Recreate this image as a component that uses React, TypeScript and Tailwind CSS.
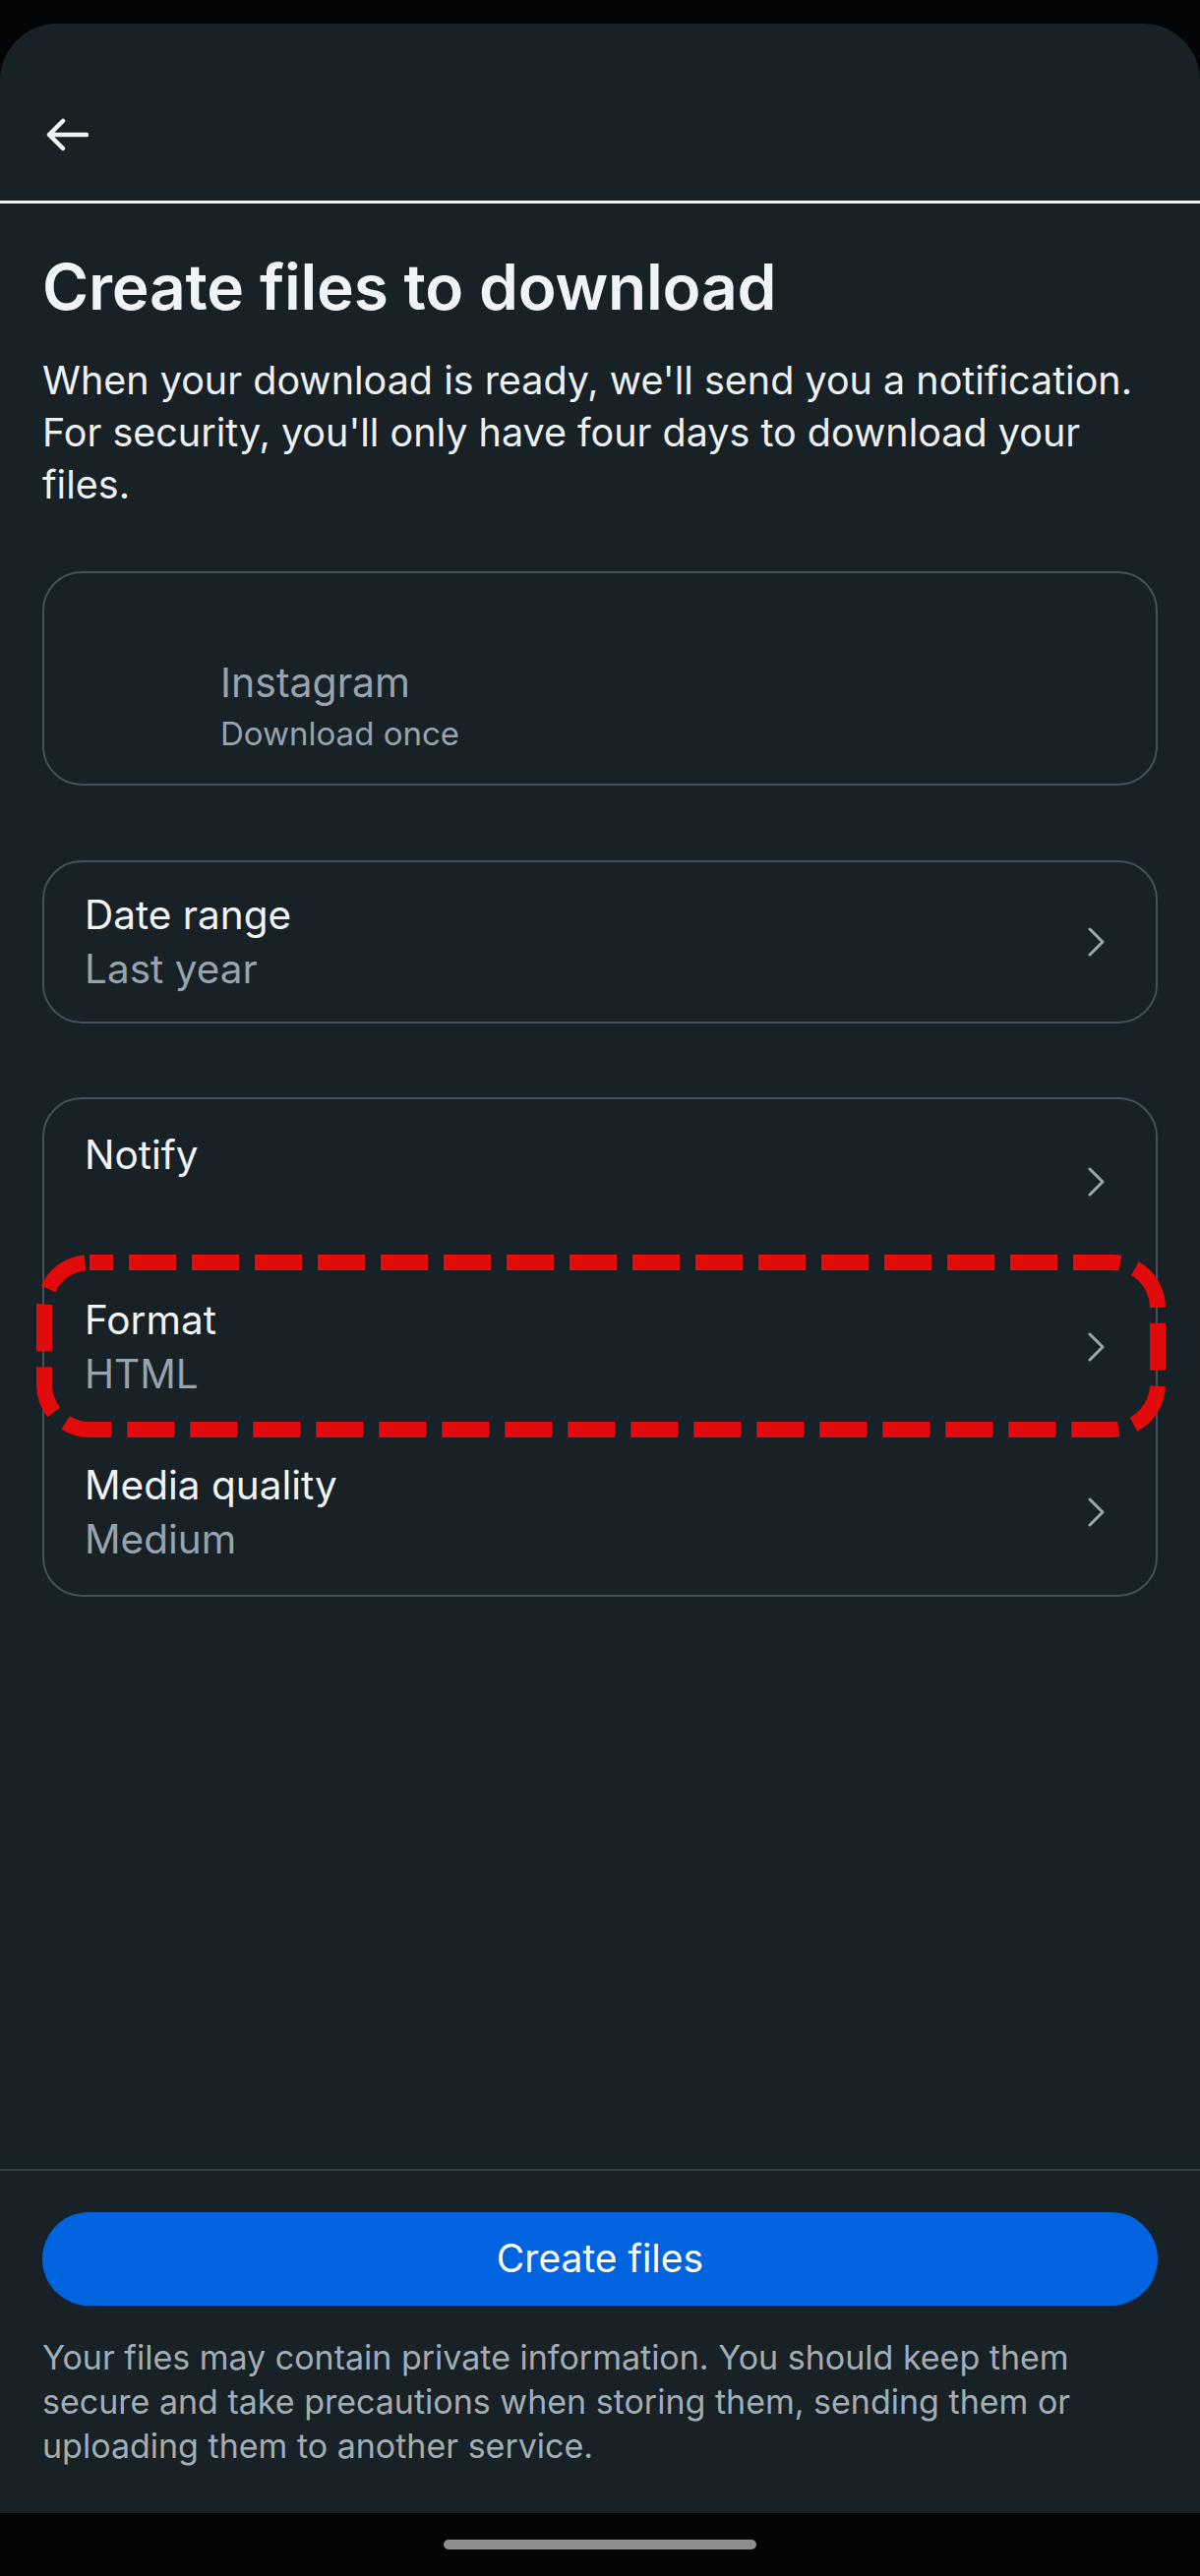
import React from "react"

interface SettingRow {
  title: string
  value: string
}

const exportRows: SettingRow[] = [
  { title: "Notify", value: "" },
  { title: "Format", value: "HTML" },
  { title: "Media quality", value: "Medium" },
]

function Chevron() {
  return (
    <svg width="20" height="30" viewBox="0 0 20 30" fill="none" className="flex-shrink-0">
      <path
        d="M3 2 L16 15 L3 28"
        stroke="#9aa6b0"
        strokeWidth="3"
        strokeLinecap="round"
        strokeLinejoin="round"
      />
    </svg>
  )
}

function BackArrow() {
  return (
    <svg width="44" height="34" viewBox="0 0 44 34" fill="none">
      <path
        d="M42 17 H4 M18 3 L4 17 L18 31"
        stroke="#f1f4f7"
        strokeWidth="4.5"
        strokeLinecap="round"
        strokeLinejoin="round"
      />
    </svg>
  )
}

function Row({ row, tall }: { row: SettingRow; tall?: boolean }) {
  return (
    <div className={`${tall ? "h-[168px]" : "h-[162px]"} flex items-center pl-[41px] pr-[50px]`}>
      <div className="flex-1 min-w-0">
        <div className="text-[40.5px] leading-[55px] text-[#f1f4f7]">{row.title}</div>
        <div className="text-[40.5px] leading-[55px] text-[#97a3ad]">{row.value || "\u00A0"}</div>
      </div>
      <Chevron />
    </div>
  )
}

export default function App() {
  return (
    <div className="w-[1220px] h-[2620px] bg-[#030405] flex flex-col font-['Inter',sans-serif] overflow-hidden">
      {/* status bar area */}
      <div className="h-[24px] flex-shrink-0" />

      <div className="flex-1 flex flex-col bg-[#172126] rounded-t-[58px]">
        {/* Top bar */}
        <div className="h-[180px] flex-shrink-0 pl-[46px] pt-[96px]">
          <BackArrow />
        </div>
        <div className="h-[3px] bg-[#f1f4f7] flex-shrink-0" />

        {/* Content */}
        <div className="flex-1 px-[43px]">
          <h1 className="mt-[45px] text-[64px] leading-[80px] font-semibold text-[#f1f4f7] tracking-[-0.2px]">
            Create files to download
          </h1>
          <p className="mt-[29px] text-[39.5px] leading-[53px] text-[#eef1f4]">
            When your download is ready, we'll send you a notification. For security, you'll only
            have four days to download your files.
          </p>

          {/* Source */}
          <div className="mt-[61px] h-[218px] rounded-[40px] border-[2.5px] border-[#43515c] pl-[179px] pt-[85px]">
            <div className="text-[41px] leading-[52px] text-[#97a3ad]">Instagram</div>
            <div className="mt-[4px] text-[33px] leading-[44px] text-[#97a3ad]">Download once</div>
          </div>

          {/* Date range */}
          <div className="mt-[76px] rounded-[40px] border-[2.5px] border-[#43515c] overflow-hidden">
            <Row row={{ title: "Date range", value: "Last year" }} />
          </div>

          {/* Export options */}
          <div className="mt-[75px] relative rounded-[40px] border-[2.5px] border-[#43515c]">
            {exportRows.map((row) => (
              <Row key={row.title} row={row} tall />
            ))}

            {/* red dashed highlight around Format */}
            <svg
              className="absolute left-[-8px] top-[158px] pointer-events-none"
              width="1148"
              height="186"
              viewBox="0 0 1148 186"
              fill="none"
            >
              <rect
                x="8"
                y="8"
                width="1132"
                height="170"
                rx="46"
                stroke="#e20b0b"
                strokeWidth="16"
                strokeDasharray="48 16"
                strokeDashoffset="24"
              />
            </svg>
          </div>
        </div>

        {/* Footer */}
        <div className="flex-shrink-0 border-t-2 border-[#333f47] px-[43px] pt-[42px] pb-[46px]">
          <button className="w-full h-[95px] rounded-full bg-[#0064e0] text-[39px] text-white">
            Create files
          </button>
          <p className="mt-[30px] text-[34px] leading-[45px] text-[#a3adb5]">
            Your files may contain private information. You should keep them secure and take
            precautions when storing them, sending them or uploading them to another service.
          </p>
        </div>

        {/* nav bar */}
        <div className="h-[64px] flex-shrink-0 bg-[#030405] flex items-start justify-center pt-[27px]">
          <div className="w-[318px] h-[10px] rounded-full bg-[#8e8e8e]" />
        </div>
      </div>
    </div>
  )
}
